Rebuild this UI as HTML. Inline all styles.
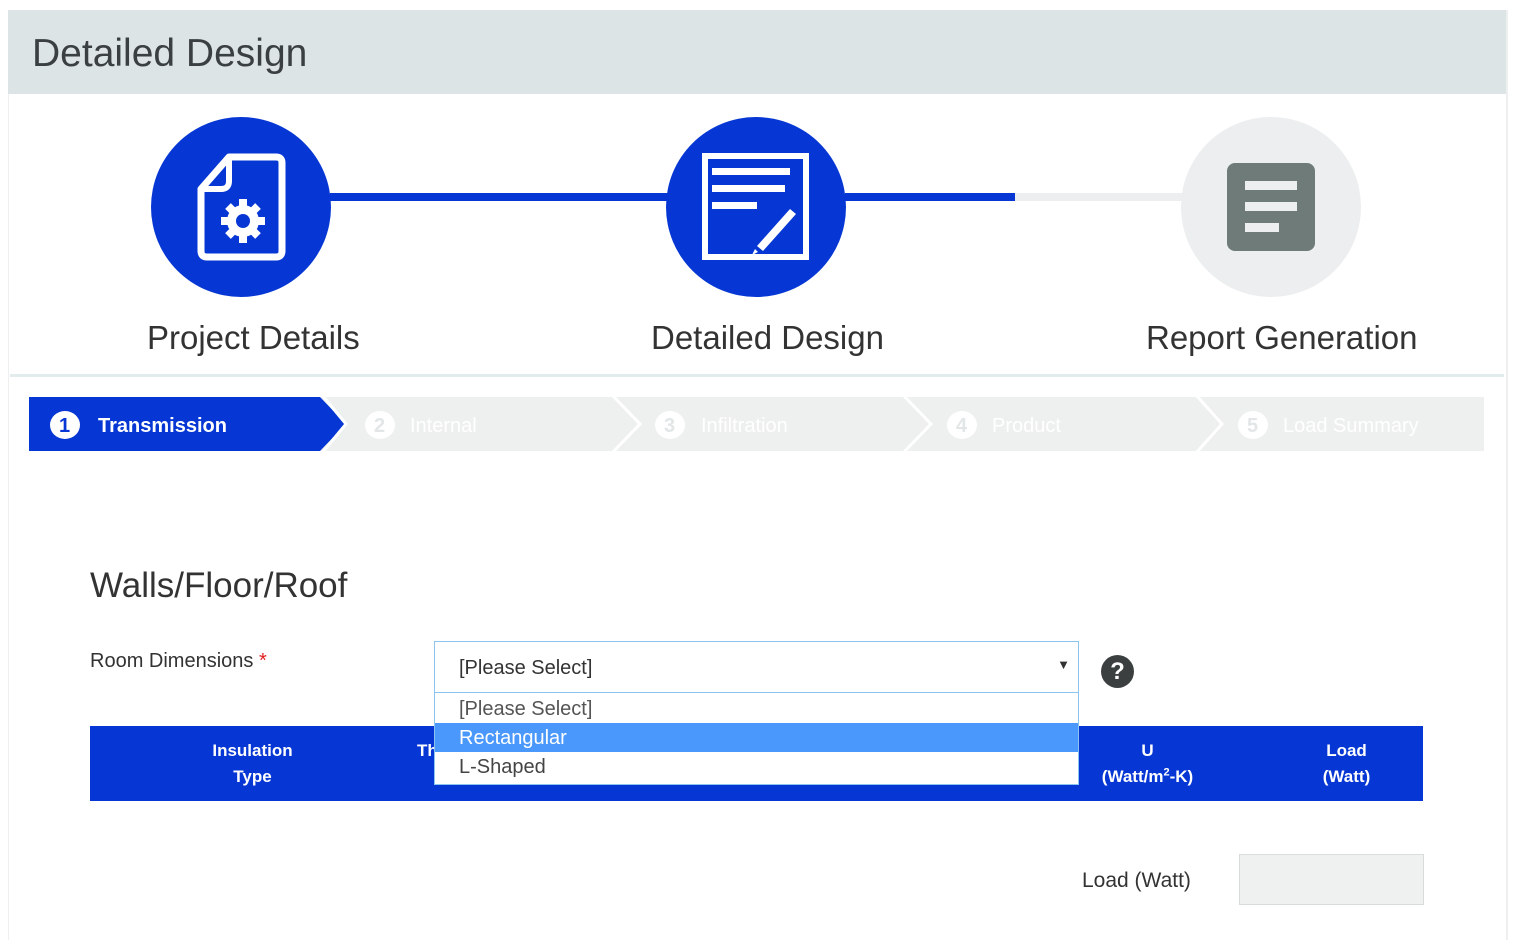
<!DOCTYPE html>
<html><head><meta charset="utf-8"><style>
body{margin:0;width:1515px;height:931px;background:#fff;font-family:"Liberation Sans","DejaVu Sans",sans-serif;position:relative;overflow:hidden;color:#333}
.a{position:absolute}
.card{left:8px;top:10px;width:1497px;height:930px;border-left:1px solid #eef0f0;border-right:2px solid #eef0f0}
.hdr{left:8px;top:10px;width:1498px;height:84px;background:#dde4e5}
.hdr span{position:absolute;left:24px;top:22px;font-size:39px;color:#3a3f42}
.circ{width:180px;height:180px;border-radius:50%;top:117px}
.lbl{font-size:33px;color:#333;top:319px}
</style></head><body>
<div class="a card"></div>
<div class="a hdr"><span>Detailed Design</span></div>
<div class="a" style="left:330px;top:193px;width:340px;height:8px;background:#0637d4"></div>
<div class="a" style="left:845px;top:193px;width:170px;height:8px;background:#0637d4"></div>
<div class="a" style="left:1015px;top:193px;width:170px;height:8px;background:#eceeef"></div>
<div class="a circ" style="left:151px;background:#0637d4">
<svg width="180" height="180" viewBox="0 0 180 180"><path d="M78 40 H125 Q131 40 131 46 V134 Q131 140 125 140 H56 Q50 140 50 134 V72 Z" fill="none" stroke="#fff" stroke-width="7" stroke-linejoin="round"/><path d="M78 40 V64 Q78 72 70 72 H50" fill="none" stroke="#fff" stroke-width="6"/><circle cx="92" cy="104" r="16" fill="#fff"/><g stroke="#fff" stroke-width="8"><line x1="92" y1="82" x2="92" y2="126"/><line x1="70" y1="104" x2="114" y2="104"/><line x1="77" y1="89" x2="107" y2="119"/><line x1="107" y1="89" x2="77" y2="119"/></g><circle cx="92" cy="104" r="7" fill="#0637d4"/></svg></div>
<div class="a circ" style="left:666px;background:#0637d4">
<svg width="180" height="180" viewBox="0 0 180 180"><rect x="39" y="39" width="101" height="101" fill="none" stroke="#fff" stroke-width="6"/><rect x="46" y="51" width="78" height="7" fill="#fff"/><rect x="46" y="68" width="73" height="7" fill="#fff"/><rect x="46" y="85" width="45" height="7" fill="#fff"/><path d="M124 92 L130 97 L97 134 L91 129 Z" fill="#fff"/><path d="M89 132 L86 138 L92 135 Z" fill="#fff"/></svg></div>
<div class="a circ" style="left:1181px;background:#eceeef">
<svg width="180" height="180" viewBox="0 0 180 180"><rect x="46" y="46" width="88" height="88" rx="8" fill="#6f7b78"/><rect x="64" y="64" width="52" height="9" fill="#eceeef"/><rect x="64" y="85" width="52" height="9" fill="#eceeef"/><rect x="64" y="106" width="34" height="9" fill="#eceeef"/></svg></div>
<div class="a lbl" style="left:147px">Project Details</div>
<div class="a lbl" style="left:651px">Detailed Design</div>
<div class="a lbl" style="left:1146px">Report Generation</div>
<div class="a" style="left:10px;top:374px;width:1494px;height:3px;background:#e3ecec"></div>
<svg class="a" style="left:0;top:390px" width="1515" height="70">
<rect x="29" y="7" width="1455" height="54" fill="#eef0f0"/>
<path d="M29 7 H320 L346 34 L320 61 H29 Z" fill="#0637d4"/>
<g fill="none" stroke="#fff" stroke-width="3"><path d="M322 5 L346 34 L322 63"/><path d="M612 5 L640 34 L612 63"/><path d="M903 5 L931 34 L903 63"/><path d="M1196 5 L1222 34 L1196 63"/></g>
<g font-family="Liberation Sans,sans-serif" font-size="20"><ellipse cx="65" cy="35" rx="15" ry="14" fill="#fff"/><text x="59" y="42" fill="#0637d4" font-weight="bold">1</text><text x="98" y="42" fill="#fff" font-weight="bold">Transmission</text>
<g fill="#fff"><ellipse cx="380" cy="35" rx="15" ry="14"/><ellipse cx="670" cy="35" rx="15" ry="14"/><ellipse cx="962" cy="35" rx="15" ry="14"/><ellipse cx="1253" cy="35" rx="15" ry="14"/><text x="410" y="42">Internal</text><text x="701" y="42">Infiltration</text><text x="992" y="42">Product</text><text x="1283" y="42">Load Summary</text></g>
<g fill="#e2e6e6" font-weight="bold"><text x="374" y="42">2</text><text x="664" y="42">3</text><text x="956" y="42">4</text><text x="1247" y="42">5</text></g></g></svg>
<div class="a" style="left:90px;top:566px;font-size:35px;color:#333">Walls/Floor/Roof</div>
<div class="a" style="left:90px;top:650px;font-size:20px;color:#333">Room Dimensions <span style="color:#e02020">*</span></div>
<div class="a" style="left:90px;top:726px;width:1333px;height:75px;background:#0637d4"></div>
<div class="a" style="left:90px;top:738px;width:325px;text-align:center;color:#fff;font-weight:bold;font-size:17px;line-height:26px">Insulation<br>Type</div>
<div class="a" style="left:417px;top:738px;color:#fff;font-weight:bold;font-size:17px;line-height:26px">Th</div>
<div class="a" style="left:1080px;top:738px;width:135px;text-align:center;color:#fff;font-weight:bold;font-size:17px;line-height:26px">U<br>(Watt/m<sup style="font-size:11px;line-height:0">2</sup>-K)</div>
<div class="a" style="left:1280px;top:738px;width:133px;text-align:center;color:#fff;font-weight:bold;font-size:17px;line-height:26px">Load<br>(Watt)</div>
<div class="a" style="left:434px;top:641px;width:643px;height:50px;border:1px solid #8cc4f0;background:#fff"><span style="position:absolute;left:24px;top:15px;font-size:20px;color:#333">[Please Select]</span><span style="position:absolute;right:8px;top:15px;font-size:13px;color:#333">▼</span></div>
<div class="a" style="left:434px;top:692px;width:643px;height:91px;border:1px solid #8cc4f0;background:#fff;font-size:20px">
<div style="height:30px;line-height:32px;padding-left:24px;color:#555">[Please Select]</div>
<div style="height:29px;line-height:30px;padding-left:24px;background:#4a98fb;color:#fff">Rectangular</div>
<div style="height:30px;line-height:30px;padding-left:24px;color:#444">L-Shaped</div></div>
<div class="a" style="left:1101px;top:655px;width:33px;height:33px;border-radius:50%;background:#3b3f40;color:#fff;font-weight:bold;font-size:24px;text-align:center;line-height:33px">?</div>
<div class="a" style="left:1082px;top:869px;font-size:21px;color:#333">Load (Watt)</div>
<div class="a" style="left:1239px;top:854px;width:183px;height:49px;border:1px solid #d8dcdc;background:#eff1f1"></div>
</body></html>
